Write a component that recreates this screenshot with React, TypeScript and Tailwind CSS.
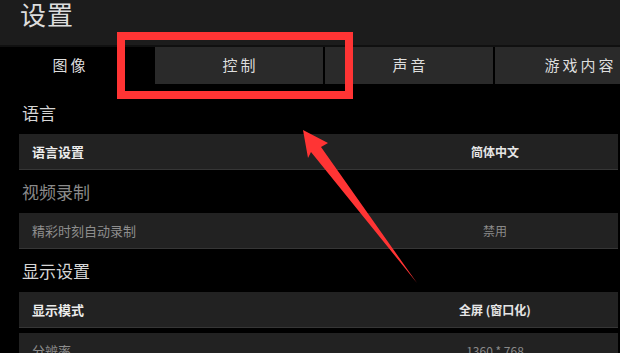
const font = { fontFamily: '"Noto Sans CJK SC", "Noto Sans", sans-serif' };

type Row = { label: string; value: string; dim?: boolean };

const sections: { title: string; dim?: boolean; rows: Row[] }[] = [
  { title: "语言", rows: [{ label: "语言设置", value: "简体中文" }] },
  { title: "视频录制", dim: true, rows: [{ label: "精彩时刻自动录制", value: "禁用", dim: true }] },
  {
    title: "显示设置",
    rows: [
      { label: "显示模式", value: "全屏 (窗口化)" },
      { label: "分辨率", value: "1360 * 768", dim: true },
    ],
  },
];

const tabs = ["控制", "声音", "游戏内容"];

function SettingRow({ row }: { row: Row }) {
  return (
    <div className="flex h-[36px] items-center bg-[#222222] border-b border-[#363636]">
      <div
        className={`flex-1 pl-[13px] text-[13px] ${row.dim ? "text-[#8e8e8e]" : "text-[#ececec] font-bold"}`}
      >
        {row.label}
      </div>
      <div
        className={`w-[246px] text-center text-[12px] ${row.dim ? "text-[#8a8a8a]" : "text-[#e6e6e6] font-bold"}`}
      >
        {row.value}
      </div>
    </div>
  );
}

export default function App() {
  return (
    <div className="relative w-[620px] h-[353px] overflow-hidden bg-black" style={font}>
      {/* header */}
      <div className="h-[45px] bg-[#1c1c1c] pl-[20px]">
        <div className="text-[26px] leading-[28px] tracking-[1px] text-[#dcdcdc]">设置</div>
      </div>
      <div className="h-[2px] bg-[#101010]" />

      {/* tabs */}
      <div className="flex h-[37px] gap-[2px] overflow-hidden">
        <div className="w-[153px] shrink-0 pr-[12px] flex items-center justify-center text-[15px] tracking-[3px] text-[#dedede] bg-black">
          图像
        </div>
        {tabs.map((t) => (
          <div
            key={t}
            className="w-[168px] shrink-0 pl-[3px] flex items-center justify-center text-[15px] tracking-[3px] text-[#dedede] bg-[#2a2a2a]"
          >
            {t}
          </div>
        ))}
      </div>

      {/* content */}
      <div className="pl-[19px] pr-[2px] pt-[7px]">
        {sections.map((s) => (
          <div key={s.title}>
            <div
              className={`h-[43px] flex items-center pl-[3px] text-[17px] ${s.dim ? "text-[#8a8a8a]" : "text-[#d6d6d6]"}`}
            >
              {s.title}
            </div>
            <div className="flex flex-col gap-[5px]">
              {s.rows.map((r) => (
                <SettingRow key={r.label} row={r} />
              ))}
            </div>
          </div>
        ))}
      </div>

      {/* annotation: red box */}
      <div className="absolute left-[117px] top-[32px] w-[236px] h-[67px] border-[8px] border-[#ff3434]" />

      {/* annotation: arrow */}
      <svg className="absolute left-0 top-0" width="620" height="353" viewBox="0 0 620 353">
        <polygon
          points="303,130 328,143 321,147 417,283 311,152 308,158"
          fill="#ff3434"
        />
      </svg>
    </div>
  );
}
